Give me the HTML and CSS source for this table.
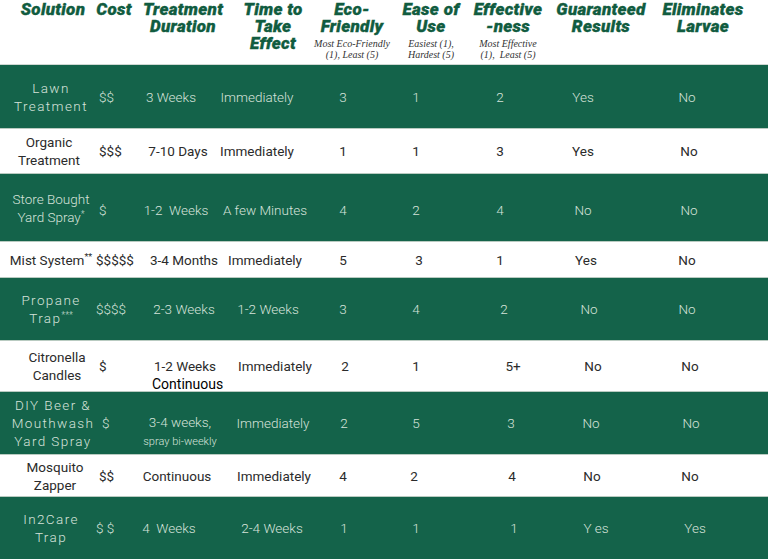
FILE: index.html
```html
<!DOCTYPE html>
<html>
<head>
<meta charset="utf-8">
<link rel="stylesheet" href="styles.css">
</head>
<body>
<div class="table">
  <div class="head">
    <div class="h"><div class="ht">Solution</div></div>
    <div class="h"><div class="ht">Cost</div></div>
    <div class="h"><div class="ht">Treatment<br>Duration</div></div>
    <div class="h"><div class="ht">Time to<br>Take<br>Effect</div></div>
    <div class="h"><div class="ht">Eco-<br>Friendly</div><div class="note">Most Eco-Friendly<br>(1), Least (5)</div></div>
    <div class="h"><div class="ht">Ease of<br>Use</div><div class="note">Easiest (1),<br>Hardest (5)</div></div>
    <div class="h"><div class="ht">Effective<br>-ness</div><div class="note">Most Effective<br>(1),&nbsp; Least (5)</div></div>
    <div class="h"><div class="ht">Guaranteed<br>Results</div></div>
    <div class="h"><div class="ht">Eliminates<br>Larvae</div></div>
  </div>

  <div class="row green r1">
    <div class="c sol wide">Lawn<br>Treatment</div>
    <div class="c cost">$$</div>
    <div class="c m8">3 Weeks</div>
    <div class="c m11">Immediately</div>
    <div class="c">3</div>
    <div class="c">1</div>
    <div class="c m6">2</div>
    <div class="c m5">Yes</div>
    <div class="c m2">No</div>
  </div>

  <div class="row white r2">
    <div class="c sol m2">Organic<br>Treatment</div>
    <div class="c cost">$$$</div>
    <div class="c m1">7-10 Days</div>
    <div class="c m11">Immediately</div>
    <div class="c">1</div>
    <div class="c">1</div>
    <div class="c m6">3</div>
    <div class="c m5">Yes</div>
    <div class="c">No</div>
  </div>

  <div class="row green r3">
    <div class="c sol">Store Bought<br>Yard Spray<sup>*</sup></div>
    <div class="c cost low">$</div>
    <div class="c low m3">1-2&nbsp; Weeks</div>
    <div class="c low m3">A few Minutes</div>
    <div class="c low">4</div>
    <div class="c low">2</div>
    <div class="c low m6">4</div>
    <div class="c low m5">No</div>
    <div class="c low">No</div>
  </div>

  <div class="row white r4">
    <div class="c sol">Mist System<sup>**</sup></div>
    <div class="c cost c0">$$$$$</div>
    <div class="c p5">3-4 Months</div>
    <div class="c m3">Immediately</div>
    <div class="c">5</div>
    <div class="c p3">3</div>
    <div class="c m6">1</div>
    <div class="c m2">Yes</div>
    <div class="c m2">No</div>
  </div>

  <div class="row green r5">
    <div class="c sol wide">Propane<br>Trap<sup>***</sup></div>
    <div class="c cost c0">$$$$</div>
    <div class="c p5">2-3 Weeks</div>
    <div class="c">1-2 Weeks</div>
    <div class="c">3</div>
    <div class="c">4</div>
    <div class="c m2">2</div>
    <div class="c p1">No</div>
    <div class="c m2">No</div>
  </div>

  <div class="row white r6">
    <div class="c sol p6">Citronella<br>Candles</div>
    <div class="c cost">$</div>
    <div class="c first p6">1-2 Weeks<br><span class="strong">Continuous</span></div>
    <div class="c p7">Immediately</div>
    <div class="c p2">2</div>
    <div class="c">1</div>
    <div class="c p7">5+</div>
    <div class="c p5">No</div>
    <div class="c p1">No</div>
  </div>

  <div class="row green r7">
    <div class="c sol wide p2">DIY Beer &amp;<br>Mouthwash<br>Yard Spray</div>
    <div class="c cost c6">$</div>
    <div class="c first2 p1">3-4 weeks,<br><span class="small">spray bi-weekly</span></div>
    <div class="c p5">Immediately</div>
    <div class="c p1">2</div>
    <div class="c">5</div>
    <div class="c p5">3</div>
    <div class="c p3">No</div>
    <div class="c p2">No</div>
  </div>

  <div class="row white r8">
    <div class="c sol p4">Mosquito<br>Zapper</div>
    <div class="c cost">$$</div>
    <div class="c m2">Continuous</div>
    <div class="c p6">Immediately</div>
    <div class="c">4</div>
    <div class="c m2">2</div>
    <div class="c p6">4</div>
    <div class="c p4">No</div>
    <div class="c p1">No</div>
  </div>

  <div class="row green r9">
    <div class="c sol wide">In2Care<br>Trap</div>
    <div class="c cost c0">$ $</div>
    <div class="c m10">4&nbsp; Weeks</div>
    <div class="c p4">2-4 Weeks</div>
    <div class="c p1">1</div>
    <div class="c">1</div>
    <div class="c p8">1</div>
    <div class="c p8">Y es</div>
    <div class="c p6">Yes</div>
  </div>
</div>
</body>
</html>
```

FILE: styles.css
```css
html, body {
  margin: 0;
  padding: 0;
  background: #ffffff;
}
body {
  width: 768px;
  height: 559px;
  overflow: hidden;
  font-family: Roboto, "Liberation Sans", sans-serif;
}
.table {
  width: 768px;
}
.head {
  box-sizing: border-box;
  border-bottom: 1px solid #cfd8d3;
  display: grid;
  grid-template-columns: 78px 44px 94px 86px 72px 86px 68px 118px 86px;
  padding-left: 14px;
  height: 65px;
}
.h {
  display: flex;
  flex-direction: column;
  align-items: center;
  min-width: 0;
}
.ht {
  font-family: Roboto, "DejaVu Sans", sans-serif;
  font-weight: 900;
  font-style: italic;
  font-size: 17px;
  line-height: 17px;
  letter-spacing: 0.3px;
  color: #115c40;
  -webkit-text-stroke: 0.35px #115c40;
  text-align: center;
  white-space: nowrap;
  padding-top: 1px;
}
.note {
  font-family: "Liberation Serif", serif;
  font-style: italic;
  font-size: 10px;
  line-height: 11px;
  color: #333333;
  text-align: center;
  white-space: nowrap;
  margin-top: 3px;
}
.row {
  display: grid;
  grid-template-columns: 96px 44px 78px 100px 50px 96px 84px 80px 122px 18px;
  align-items: center;
  box-sizing: border-box;
  font-size: 13.5px;
  line-height: 18px;
}
.green {
  background: #14634a;
  color: #d6e2da;
  font-weight: 300;
}
.white {
  background: #ffffff;
  color: #2b2b2b;
  border-top: 1px solid #b9cbc1;
  border-bottom: 1px solid #b9cbc1;
}
.c {
  display: block;
  text-align: center;
  white-space: nowrap;
  min-width: 0;
}
.sol {
  padding-left: 6px;
}
.cost {
  text-align: left;
  padding-left: 3px;
}
.cost.c0 { padding-left: 0; }
.cost.c6 { padding-left: 6px; }
.wide {
  letter-spacing: 1.4px;
}
sup {
  font-size: 9px;
  line-height: 0;
  vertical-align: 5px;
  letter-spacing: 0;
}
.first {
  margin-bottom: -18px;
}
.first2 {
  margin-bottom: -16px;
}
.strong {
  color: #000000;
  font-weight: 400;
  font-size: 14px;
}
.small {
  font-size: 11px;
  line-height: 16px;
}
.low {
  padding-top: 5px;
}
/* horizontal nudges of the centred text inside a column */
.m11 { padding-right: 22px; }
.m10 { padding-right: 20px; }
.m8 { padding-right: 16px; }
.m6 { padding-right: 12px; }
.m5 { padding-right: 10px; }
.m3 { padding-right: 6px; }
.m2 { padding-right: 4px; }
.m1 { padding-right: 2px; }
.p1 { padding-left: 2px; }
.p2 { padding-left: 4px; }
.p3 { padding-left: 6px; }
.p4 { padding-left: 8px; }
.p5 { padding-left: 10px; }
.p6 { padding-left: 12px; }
.p7 { padding-left: 14px; }
.p8 { padding-left: 16px; }
.sol.m2 { padding-left: 2px; padding-right: 0; }
.sol.p2 { padding-left: 10px; }
.sol.p4 { padding-left: 14px; }
.sol.p6 { padding-left: 18px; }
.r1 { height: 63px; }
.r2 { height: 46px; }
.r3 { height: 67px; }
.r4 { height: 37px; }
.r5 { height: 62px; }
.r6 { height: 52px; }
.r7 { height: 62px; }
.r8 { height: 43px; }
.r9 { height: 62px; }
```
